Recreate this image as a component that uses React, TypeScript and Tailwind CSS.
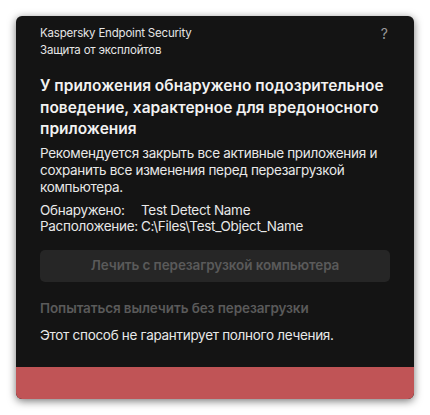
import React from "react";

const ThreatAlert = () => {
  return (
    <div className="w-[430px] h-[415px] bg-white p-4 font-['Inter',sans-serif]">
      <div className="w-[398px] h-[383px] flex flex-col rounded-md overflow-hidden bg-[#141414] shadow-[0_2px_8px_rgba(0,0,0,0.55)]">
        {/* Header */}
        <div className="flex justify-between px-6 pt-[9px]">
          <div className="flex flex-col text-[11.5px] leading-[17px] text-[#e6e6e6] tracking-[-0.2px]">
            <span>Kaspersky Endpoint Security</span>
            <span>Защита от эксплойтов</span>
          </div>
          <span className="text-[14px] leading-[17px] text-[#9a9a9a] pr-[2px]">?</span>
        </div>

        {/* Body */}
        <div className="flex-1 flex flex-col px-6">
          <h1 className="mt-[16px] text-[15.5px] leading-[21.5px] font-semibold text-[#f2f2f2]">
            У приложения обнаружено подозрительное поведение, характерное для вредоносного приложения
          </h1>

          <p className="mt-[5px] text-[13.5px] leading-[17px] text-[#e8e8e8] tracking-[-0.3px]">
            Рекомендуется закрыть все активные приложения и сохранить все изменения перед перезагрузкой компьютера.
          </p>

          <div className="mt-[6px] grid grid-cols-[101px_1fr] text-[13.5px] leading-[16px] text-[#e8e8e8] tracking-[-0.3px]">
            <span>Обнаружено:</span>
            <span>Test Detect Name</span>
            <span>Расположение:</span>
            <span>C:\Files\Test_Object_Name</span>
          </div>

          <button className="mt-[16px] h-[32px] w-full rounded-[5px] bg-[#262626] text-[13.5px] font-semibold text-[#5a5a5a] tracking-[-0.1px]">
            Лечить с перезагрузкой компьютера
          </button>

          <span className="mt-[18px] text-[13.5px] leading-[17px] font-semibold text-[#5a5a5a] tracking-[-0.1px]">
            Попытаться вылечить без перезагрузки
          </span>

          <p className="mt-[10px] text-[13.5px] leading-[17px] text-[#e8e8e8] tracking-[-0.3px]">
            Этот способ не гарантирует полного лечения.
          </p>
        </div>

        {/* Footer */}
        <div className="h-[32px] bg-[#c05456]" />
      </div>
    </div>
  );
};

export default ThreatAlert;
